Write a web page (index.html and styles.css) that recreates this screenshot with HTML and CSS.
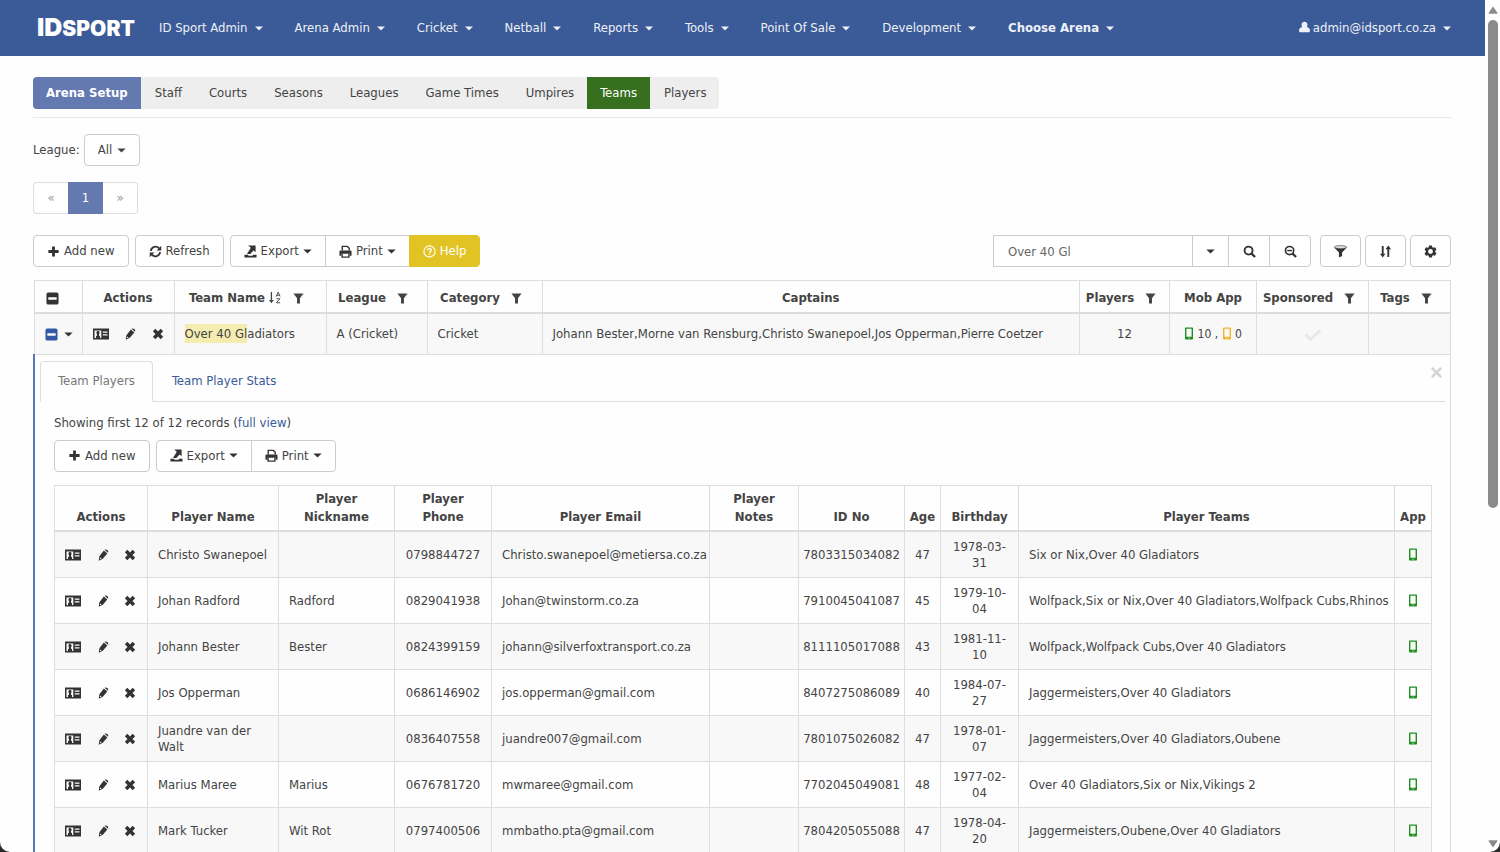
FILE: index.html
```html
<!DOCTYPE html>
<html lang="en">
<head>
<meta charset="utf-8">
<title>ID Sport - Teams</title>
<link rel="stylesheet" href="styles.css">
</head>
<body>
<svg class="sprite" aria-hidden="true">
  <symbol id="caret" viewBox="0 0 10 6"><path d="M0 0.5h10L5 5.5z"/></symbol>
  <symbol id="user" viewBox="0 0 14 14"><path d="M7 .2C9.500 .2 10.800 2 10.800 4.200 10.800 5.400 10.400 6.300 9.900 7 12.500 7.500 14 9 14 11.500 14 13 13.500 13.800 12.500 13.800H1.500C.5 13.800 0 13 0 11.500 0 9 1.500 7.500 4.100 7 3.600 6.300 3.200 5.400 3.200 4.200 3.200 2 4.500 .2 7 .2z"/></symbol>
  <symbol id="plus" viewBox="0 0 14 14"><path d="M5.500 1.500h3v4h4v3h-4v4h-3v-4h-4v-3h4z"/></symbol>
  <symbol id="refresh" viewBox="0 0 14 14"><path d="M2 6.300A5.100 5.100 0 0 1 10.900 3.600M12 7.700A5.100 5.100 0 0 1 3.100 10.400" fill="none" stroke="currentColor" stroke-width="2"/><path d="M13.200.8v5H8.200zM.8 13.200v-5h5z"/></symbol>
  <symbol id="export" viewBox="0 0 14 14"><path d="M.5 10.500h3.500l1 1h4l1-1h3.500v3H.5z"/><path d="M4.500 .5h8v7.300L10.300 5.800 6.800 9.600H3.200L7.300 3z"/></symbol>
  <symbol id="print" viewBox="0 0 14 14"><path d="M3.500 6V1.500h5.500L11 3.500V6" fill="none" stroke="currentColor" stroke-width="1.500"/><path d="M1.500 6h11a1 1 0 0 1 1 1v4.500h-2v-2h-9v2h-2V7a1 1 0 0 1 1-1z"/><path d="M3.300 9.500v3.500h7.400V9.500" fill="none" stroke="currentColor" stroke-width="1.500"/></symbol>
  <symbol id="help" viewBox="0 0 14 14"><circle cx="7" cy="7" r="6" fill="none" stroke="currentColor" stroke-width="1.200"/><path d="M5 5.700C5 3.300 9 3.300 9 5.600 9 6.900 7.100 6.900 7.100 8.400" fill="none" stroke="currentColor" stroke-width="1.400"/><path d="M6.300 9.300h1.500v1.500H6.300z"/></symbol>
  <symbol id="minus" viewBox="0 0 14 14"><path fill-rule="evenodd" d="M2.500.5h9a2 2 0 0 1 2 2v9a2 2 0 0 1-2 2h-9a2 2 0 0 1-2-2v-9a2 2 0 0 1 2-2zM2.500 5.700v2.600h9V5.700z"/></symbol>
  <symbol id="card" viewBox="0 0 16 12"><path fill-rule="evenodd" d="M0 .5h16v11H0zM1.500 2.500v7.500H3V8.200L4 7.500V6.300L3.500 5.500V4L4.300 3h1.400l.8 1v1.500L6 6.300v1.200l1 .7V10h1.300V2.500zM9.800 3.500v1.300h4.700V3.500zM9.800 6.300v1.300h4.700V6.300z"/></symbol>
  <symbol id="pencil" viewBox="0 0 14 14"><path fill-rule="evenodd" d="M8 1.800 12 5.300 6.800 11.500 2 13.700 2.800 8.600zM3.700 9.800 3.300 12 5.400 11zM8.800 1Q10.300-.2 12 1.300T12.800 4.400z"/></symbol>
  <symbol id="times" viewBox="0 0 14 14"><path d="M1 3.900 3.900 1 7 4.100 10.100 1 13 3.900 9.900 7l3.100 3.100L10.100 13 7 9.900 3.900 13 1 10.100 4.100 7z"/></symbol>
  <symbol id="close" viewBox="0 0 14 14"><path d="M2 2 12 12M12 2 2 12" stroke="currentColor" stroke-width="2.500"/></symbol>
  <symbol id="sortaz" viewBox="0 0 14 14"><path d="M2.600 1v10" stroke="currentColor" stroke-width="1.400"/><path d="M0 9.700h5.200L2.600 13.300z"/><path d="M7.800 6 9.900 1.200 12 6M8.500 4.600h2.800M8 8.300h3.700L8 12.700h4" fill="none" stroke="currentColor" stroke-width="1"/></symbol>
  <symbol id="filter" viewBox="0 0 12 12"><path d="M.5.5h11L7.600 5.700V11.500H4.400V5.700z"/></symbol>
  <symbol id="funnel" viewBox="0 0 14 14"><path d="M0 2.500 5.300 8v5.500l3.400-1.700V8L14 2.500z"/><ellipse cx="7" cy="2.300" rx="6.600" ry="1.700" fill="#ddd" stroke="currentColor" stroke-width=".6"/></symbol>
  <symbol id="search" viewBox="0 0 14 14"><circle cx="6" cy="6" r="4.300" fill="none" stroke="currentColor" stroke-width="2"/><path d="M9 9 13 13" stroke="currentColor" stroke-width="2.400"/></symbol>
  <symbol id="zoomout" viewBox="0 0 14 14"><circle cx="6" cy="6" r="4.400" fill="none" stroke="currentColor" stroke-width="1.800"/><path d="M3.500 6h5" stroke="currentColor" stroke-width="1.600"/><path d="M9 9 13 13" stroke="currentColor" stroke-width="2.400"/></symbol>
  <symbol id="sort" viewBox="0 0 14 14"><path d="M4 1v9M10 13V4" stroke="currentColor" stroke-width="2"/><path d="M1 9.300h6L4 13.500zM7 4.700h6L10 .5z"/></symbol>
  <symbol id="cog" viewBox="0 0 14 14"><path fill-rule="evenodd" d="M5.500.5h3l.5 2 .9.500 2-.6 1.500 2.600L12 6.500v1L13.400 9l-1.500 2.600-2-.6-.9.500-.5 2h-3l-.5-2-.9-.5-2 .6L.6 9 2 7.500v-1L.6 5l1.500-2.600 2 .6.9-.5zM7 4.400a2.600 2.600 0 1 0 0 5.200 2.600 2.600 0 0 0 0-5.200z"/></symbol>
  <symbol id="mobile" viewBox="0 0 10 14"><path fill-rule="evenodd" d="M1.500.5h7a.8.8 0 0 1 .8.8v11.400a.8.8 0 0 1-.8.8h-7a.8.8 0 0 1-.8-.8V1.300a.8.8 0 0 1 .8-.8zM2.200 2v8.500h5.600V2zM4.300 11.500v1h1.400v-1z"/></symbol>
  <symbol id="check" viewBox="0 0 18 14"><path d="M1.500 6.500 6.500 11.500 16.500 2" fill="none" stroke="currentColor" stroke-width="3"/></symbol>
  <symbol id="up" viewBox="0 0 10 8"><path d="M5 .5 9.500 7q.2.800-.8.800H1.300Q.3 7.800.5 7z"/></symbol>
</svg>

<div class="window">
  <div class="page">
    <nav class="navbar">
      <a class="brand" href="#"><span class="brand-id">ID</span>SPORT</a>
      <div class="menu">
        <a href="#">ID Sport Admin<svg class="caret"><use href="#caret"/></svg></a>
        <a href="#">Arena Admin<svg class="caret"><use href="#caret"/></svg></a>
        <a href="#">Cricket<svg class="caret"><use href="#caret"/></svg></a>
        <a href="#">Netball<svg class="caret"><use href="#caret"/></svg></a>
        <a href="#">Reports<svg class="caret"><use href="#caret"/></svg></a>
        <a href="#">Tools<svg class="caret"><use href="#caret"/></svg></a>
        <a href="#">Point Of Sale<svg class="caret"><use href="#caret"/></svg></a>
        <a href="#">Development<svg class="caret"><use href="#caret"/></svg></a>
        <a class="strong" href="#">Choose Arena<svg class="caret"><use href="#caret"/></svg></a>
      </div>
      <a class="account" href="#"><svg class="user"><use href="#user"/></svg>admin@idsport.co.za<svg class="caret"><use href="#caret"/></svg></a>
    </nav>

    <main class="content">
      <div class="sections">
        <nav class="section-tabs">
          <a class="lead" href="#">Arena Setup</a>
          <a href="#">Staff</a>
          <a href="#">Courts</a>
          <a href="#">Seasons</a>
          <a href="#">Leagues</a>
          <a href="#">Game Times</a>
          <a href="#">Umpires</a>
          <a class="current" href="#">Teams</a>
          <a href="#">Players</a>
        </nav>
      </div>

      <div class="league">
        <label for="league">League:</label>
        <span class="select"><select id="league"><option>All</option></select><svg class="caret"><use href="#caret"/></svg></span>
      </div>

      <nav class="pager" aria-label="Pages">
        <a href="#">«</a><a class="current" href="#">1</a><a href="#">»</a>
      </nav>

      <div class="toolbar">
        <button class="btn"><svg class="icon"><use href="#plus"/></svg>Add new</button>
        <button class="btn"><svg class="icon"><use href="#refresh"/></svg>Refresh</button>
        <div class="group">
          <button class="btn"><svg class="icon"><use href="#export"/></svg>Export<svg class="caret"><use href="#caret"/></svg></button>
          <button class="btn"><svg class="icon"><use href="#print"/></svg>Print<svg class="caret"><use href="#caret"/></svg></button>
          <button class="btn help"><svg class="icon"><use href="#help"/></svg>Help</button>
        </div>
        <div class="search group">
          <input type="text" value="Over 40 Gl" aria-label="Quick search">
          <button class="btn narrow" aria-label="Search options"><svg class="caret"><use href="#caret"/></svg></button>
          <button class="btn square" aria-label="Search"><svg class="icon"><use href="#search"/></svg></button>
          <button class="btn square" aria-label="Reset search"><svg class="icon"><use href="#zoomout"/></svg></button>
        </div>
        <div class="tools">
          <button class="btn" aria-label="Filter"><svg class="icon"><use href="#funnel"/></svg></button>
          <button class="btn" aria-label="Sort"><svg class="icon"><use href="#sort"/></svg></button>
          <button class="btn" aria-label="Settings"><svg class="icon"><use href="#cog"/></svg></button>
        </div>
      </div>

      <table class="grid teams">
        <colgroup><col class="w48"><col class="w92"><col class="w152"><col class="w101"><col class="w115"><col><col class="w90"><col class="w87"><col class="w112"><col class="w82"></colgroup>
        <thead>
          <tr>
            <th class="left"><button class="plain" aria-label="Collapse all"><svg class="icon"><use href="#minus"/></svg></button></th>
            <th>Actions</th>
            <th>Team Name<svg class="az"><use href="#sortaz"/></svg><svg class="filter"><use href="#filter"/></svg></th>
            <th>League<svg class="filter"><use href="#filter"/></svg></th>
            <th>Category<svg class="filter"><use href="#filter"/></svg></th>
            <th>Captains</th>
            <th>Players<svg class="filter"><use href="#filter"/></svg></th>
            <th>Mob App</th>
            <th>Sponsored<svg class="filter"><use href="#filter"/></svg></th>
            <th>Tags<svg class="filter"><use href="#filter"/></svg></th>
          </tr>
        </thead>
        <tbody>
          <tr class="shade">
            <td><button class="plain expand" aria-label="Team details"><svg class="icon"><use href="#minus"/></svg><svg class="caret"><use href="#caret"/></svg></button></td>
            <td><div class="actions"><a href="#" aria-label="View"><svg class="card"><use href="#card"/></svg></a><a href="#" aria-label="Edit"><svg><use href="#pencil"/></svg></a><a href="#" aria-label="Delete"><svg><use href="#times"/></svg></a></div></td>
            <td><mark>Over 40 Gl</mark>adiators</td>
            <td>A (Cricket)</td>
            <td>Cricket</td>
            <td>Johann Bester,Morne van Rensburg,Christo Swanepoel,Jos Opperman,Pierre Coetzer</td>
            <td class="center">12</td>
            <td class="center apps"><svg class="mobile"><use href="#mobile"/></svg> 10 , <svg class="mobile amber"><use href="#mobile"/></svg> 0</td>
            <td class="center"><svg class="check"><use href="#check"/></svg></td>
            <td></td>
          </tr>
          <tr>
            <td class="detail" colspan="10">
              <div class="tabs">
                <a class="current" href="#">Team Players</a>
                <a href="#">Team Player Stats</a>
                <button class="plain close" aria-label="Close"><svg class="icon"><use href="#close"/></svg></button>
              </div>
              <div class="panel">
                <p class="summary">Showing first 12 of 12 records (<a href="#">full view</a>)</p>
                <div class="toolbar">
                  <button class="btn"><svg class="icon"><use href="#plus"/></svg>Add new</button>
                  <div class="group">
                    <button class="btn"><svg class="icon"><use href="#export"/></svg>Export<svg class="caret"><use href="#caret"/></svg></button>
                    <button class="btn"><svg class="icon"><use href="#print"/></svg>Print<svg class="caret"><use href="#caret"/></svg></button>
                  </div>
                </div>
                <table class="grid players">
                  <colgroup><col class="w93"><col class="w131"><col class="w116"><col class="w97"><col class="w218"><col class="w89"><col class="w106"><col class="w36"><col class="w78"><col><col class="w37"></colgroup>
                  <thead>
                    <tr><th>Actions</th><th>Player Name</th><th>Player<br>Nickname</th><th>Player<br>Phone</th><th>Player Email</th><th>Player<br>Notes</th><th>ID No</th><th>Age</th><th>Birthday</th><th>Player Teams</th><th>App</th></tr>
                  </thead>
                  <tbody>
                    <tr><td><div class="actions"><a href="#" aria-label="View"><svg class="card"><use href="#card"/></svg></a><a href="#" aria-label="Edit"><svg><use href="#pencil"/></svg></a><a href="#" aria-label="Delete"><svg><use href="#times"/></svg></a></div></td><td>Christo Swanepoel</td><td></td><td class="center">0798844727</td><td>Christo.swanepoel@metiersa.co.za</td><td></td><td class="center">7803315034082</td><td class="center">47</td><td class="date">1978-03-31</td><td>Six or Nix,Over 40 Gladiators</td><td class="center"><svg class="mobile"><use href="#mobile"/></svg></td></tr>
                    <tr><td><div class="actions"><a href="#" aria-label="View"><svg class="card"><use href="#card"/></svg></a><a href="#" aria-label="Edit"><svg><use href="#pencil"/></svg></a><a href="#" aria-label="Delete"><svg><use href="#times"/></svg></a></div></td><td>Johan Radford</td><td>Radford</td><td class="center">0829041938</td><td>Johan@twinstorm.co.za</td><td></td><td class="center">7910045041087</td><td class="center">45</td><td class="date">1979-10-04</td><td>Wolfpack,Six or Nix,Over 40 Gladiators,Wolfpack Cubs,Rhinos</td><td class="center"><svg class="mobile"><use href="#mobile"/></svg></td></tr>
                    <tr><td><div class="actions"><a href="#" aria-label="View"><svg class="card"><use href="#card"/></svg></a><a href="#" aria-label="Edit"><svg><use href="#pencil"/></svg></a><a href="#" aria-label="Delete"><svg><use href="#times"/></svg></a></div></td><td>Johann Bester</td><td>Bester</td><td class="center">0824399159</td><td>johann@silverfoxtransport.co.za</td><td></td><td class="center">8111105017088</td><td class="center">43</td><td class="date">1981-11-10</td><td>Wolfpack,Wolfpack Cubs,Over 40 Gladiators</td><td class="center"><svg class="mobile"><use href="#mobile"/></svg></td></tr>
                    <tr><td><div class="actions"><a href="#" aria-label="View"><svg class="card"><use href="#card"/></svg></a><a href="#" aria-label="Edit"><svg><use href="#pencil"/></svg></a><a href="#" aria-label="Delete"><svg><use href="#times"/></svg></a></div></td><td>Jos Opperman</td><td></td><td class="center">0686146902</td><td>jos.opperman@gmail.com</td><td></td><td class="center">8407275086089</td><td class="center">40</td><td class="date">1984-07-27</td><td>Jaggermeisters,Over 40 Gladiators</td><td class="center"><svg class="mobile"><use href="#mobile"/></svg></td></tr>
                    <tr><td><div class="actions"><a href="#" aria-label="View"><svg class="card"><use href="#card"/></svg></a><a href="#" aria-label="Edit"><svg><use href="#pencil"/></svg></a><a href="#" aria-label="Delete"><svg><use href="#times"/></svg></a></div></td><td>Juandre van der Walt</td><td></td><td class="center">0836407558</td><td>juandre007@gmail.com</td><td></td><td class="center">7801075026082</td><td class="center">47</td><td class="date">1978-01-07</td><td>Jaggermeisters,Over 40 Gladiators,Oubene</td><td class="center"><svg class="mobile"><use href="#mobile"/></svg></td></tr>
                    <tr><td><div class="actions"><a href="#" aria-label="View"><svg class="card"><use href="#card"/></svg></a><a href="#" aria-label="Edit"><svg><use href="#pencil"/></svg></a><a href="#" aria-label="Delete"><svg><use href="#times"/></svg></a></div></td><td>Marius Maree</td><td>Marius</td><td class="center">0676781720</td><td>mwmaree@gmail.com</td><td></td><td class="center">7702045049081</td><td class="center">48</td><td class="date">1977-02-04</td><td>Over 40 Gladiators,Six or Nix,Vikings 2</td><td class="center"><svg class="mobile"><use href="#mobile"/></svg></td></tr>
                    <tr><td><div class="actions"><a href="#" aria-label="View"><svg class="card"><use href="#card"/></svg></a><a href="#" aria-label="Edit"><svg><use href="#pencil"/></svg></a><a href="#" aria-label="Delete"><svg><use href="#times"/></svg></a></div></td><td>Mark Tucker</td><td>Wit Rot</td><td class="center">0797400506</td><td>mmbatho.pta@gmail.com</td><td></td><td class="center">7804205055088</td><td class="center">47</td><td class="date">1978-04-20</td><td>Jaggermeisters,Oubene,Over 40 Gladiators</td><td class="center"><svg class="mobile"><use href="#mobile"/></svg></td></tr>
                  </tbody>
                </table>
              </div>
            </td>
          </tr>
        </tbody>
      </table>
    </main>
  </div>
  <div class="scrollbar" aria-hidden="true">
    <svg><use href="#up"/></svg>
    <div class="track"><div class="thumb"></div></div>
    <svg class="down"><use href="#up"/></svg>
  </div>
</div>
</body>
</html>
```
FILE: styles.css
```css
* { box-sizing: border-box; }

body {
  margin: 0;
  background: #2b2b2b;
  color: #444;
  font: 13px/18px "DejaVu Sans Condensed", "DejaVu Sans", sans-serif;
}

a { color: #3b5a98; text-decoration: none; }
svg { fill: currentColor; }
button, input, select { font: inherit; color: inherit; margin: 0; }
.sprite { display: none; }

.window {
  display: flex;
  height: 100vh;
  overflow: hidden;
  background: #fefefe;
  border-radius: 0 0 10px 10px;
}

.page {
  flex: 1;
  min-width: 0;
  overflow-y: auto;
  scrollbar-width: none;
}

/* Scrollbar */
.scrollbar {
  display: flex;
  flex-direction: column;
  align-items: center;
  gap: 6px;
  width: 15px;
  padding: 6px 0 4px;
  color: #8a8a8a;
}
.scrollbar svg { width: 10px; height: 8px; }
.scrollbar .down { transform: rotate(180deg); }
.track { flex: 1; width: 10px; }
.thumb { height: 60%; border-radius: 5px; background: #8a8a8a; }

/* Top bar */
.navbar {
  display: flex;
  align-items: center;
  height: 56px;
  padding: 0 34px 0 37px;
  background: #3b5a98;
}
.navbar a { color: #eef1f7; white-space: nowrap; }
.navbar .caret { width: 8px; height: 5px; margin-left: 7px; }
.navbar .brand {
  display: flex;
  align-items: baseline;
  width: 122px;
  color: #fff;
  font: 900 21px/24px Inter, sans-serif;
}
.brand .brand-id { font-size: 25px; }
.menu { display: flex; gap: 32px; }
.navbar .strong { font-weight: bold; }
.account { margin-left: auto; }
.user { width: 11px; height: 12px; margin-right: 3px; vertical-align: -1px; }
.caret { width: 9px; height: 5px; vertical-align: 1px; }

.content { padding: 21px 34px 0 33px; }

/* Section tabs */
.sections { display: flex; padding-bottom: 8px; border-bottom: 1px solid #e8e8e8; }
.section-tabs { display: flex; background: #eee; border-radius: 4px; overflow: hidden; }
.section-tabs a { padding: 7px 13px 7px 14px; color: #444; white-space: nowrap; }
.section-tabs a.lead { padding: 7px 13px; background: #6379b0; color: #fff; font-weight: bold; }
.section-tabs a.current { padding: 7px 13px; background: #36701f; color: #fff; }

.league { display: flex; align-items: center; gap: 4px; margin-top: 16px; }
.select { display: inline-grid; align-items: center; }
.select > * { grid-area: 1 / 1; }
.select select {
  appearance: none;
  width: 56px;
  height: 32px;
  padding: 0 13px;
  border: 1px solid #ccc;
  border-radius: 4px;
  background: #fff;
}
.select .caret { justify-self: end; margin-right: 14px; pointer-events: none; }

.pager { display: flex; margin-top: 16px; }
.pager a {
  width: 35px;
  padding: 6px 0;
  border: 1px solid #ddd;
  background: #fff;
  color: #999;
  text-align: center;
}
.pager a:first-child { border-right: 0; border-radius: 4px 0 0 4px; }
.pager a:last-child { border-left: 0; border-radius: 0 4px 4px 0; }
.pager a.current { border-color: #6379b0; background: #6379b0; color: #fff; }

/* Buttons */
.toolbar { display: flex; gap: 6px; }
.content > .toolbar { margin: 21px 0 13px; }
.group { display: flex; }
.btn {
  display: inline-flex;
  align-items: center;
  justify-content: center;
  gap: 4px;
  height: 32px;
  padding: 0 13px;
  border: 1px solid #ccc;
  border-radius: 4px;
  background: #fff;
  white-space: nowrap;
}
.btn .icon, .btn .caret { color: #333; }
.icon { width: 13px; height: 13px; flex: none; }
.group > * + * { margin-left: -1px; }
.group > *:not(:first-child) { border-top-left-radius: 0; border-bottom-left-radius: 0; }
.group > *:not(:last-child) { border-top-right-radius: 0; border-bottom-right-radius: 0; }
.btn.help, .help .icon { border-color: #e1c424; background: #e1c424; color: #fff; }
.search { margin-left: auto; }
.search input {
  width: 200px;
  height: 32px;
  padding: 0 14px;
  border: 1px solid #ccc;
  border-radius: 0;
  background: #fff;
  color: #666;
}
.narrow { width: 37px; }
.square { width: 42px; }
.tools { display: flex; gap: 4px; margin-left: 3px; }

/* Data grids */
.grid { width: 100%; border-collapse: collapse; table-layout: fixed; }
.grid th, .grid td { border: 1px solid #ddd; }
.grid th {
  padding: 4px 0;
  border-bottom-width: 2px;
  font-weight: bold;
  line-height: 18px;
  text-align: center;
  vertical-align: bottom;
  white-space: nowrap;
}
.grid td { padding: 7px 0 6px 10px; line-height: 16px; }
.grid .center { padding-left: 0; text-align: center; }
.teams > thead th { padding: 8px 0 5px; }
.teams .shade td { height: 41px; background: #f8f8f8; }
.grid .left { padding-left: 11px; text-align: left; }
.plain {
  display: inline-flex;
  align-items: center;
  padding: 0;
  border: 0;
  background: none;
  color: #333;
  vertical-align: middle;
}
.expand { gap: 6px; }
.expand .icon { color: #3157a5; }
.az { width: 13px; height: 13px; margin-left: 4px; vertical-align: -2px; }
.filter { width: 11px; height: 11px; margin: 0 7px 0 11px; vertical-align: -2px; }
.actions { display: flex; align-items: center; justify-content: space-between; width: 71px; }
.actions a { display: flex; color: #333; }
.actions svg { width: 12px; height: 12px; }
.actions .card { width: 16px; height: 12px; }
mark { background: #f5edb0; color: inherit; padding: 2px 0; }
.mobile { width: 10px; height: 13px; color: #1f8f1f; vertical-align: -2px; }
.amber { color: #efb52a; }
.apps { font-size: 12px; white-space: nowrap; }
.check { width: 18px; height: 14px; color: #e8e8e8; vertical-align: middle; }

.w36 { width: 36px; }
.w37 { width: 37px; }
.w48 { width: 48px; }
.w78 { width: 78px; }
.w82 { width: 82px; }
.w87 { width: 87px; }
.w89 { width: 89px; }
.w90 { width: 90px; }
.w92 { width: 92px; }
.w93 { width: 93px; }
.w97 { width: 97px; }
.w101 { width: 101px; }
.w106 { width: 106px; }
.w112 { width: 112px; }
.w115 { width: 115px; }
.w116 { width: 116px; }
.w131 { width: 131px; }
.w152 { width: 152px; }
.w218 { width: 218px; }

/* Expanded row */
.teams td.detail { padding: 6px 5px 0; border-left: 2px solid #5a78b8; border-bottom: 0; }
.tabs { display: flex; border-bottom: 1px solid #ddd; }
.tabs a { margin-bottom: -1px; padding: 10px 18px 11px; border: 1px solid transparent; line-height: 18px; }
.tabs a.current {
  padding-left: 17px;
  padding-right: 17px;
  border-color: #ddd #ddd #fefefe;
  border-radius: 4px 4px 0 0;
  background: #fefefe;
  color: #777;
}
.close { align-self: flex-start; margin: 5px 2px 0 auto; color: #d2d2d2; }
.panel { padding: 12px 13px 0 14px; }
.summary { margin: 0 0 8px; line-height: 18px; }
.panel .toolbar { margin-bottom: 13px; }
.players tbody tr:nth-child(odd) { background: #f8f8f8; }
.grid .date { padding-left: 11px; padding-right: 11px; text-align: center; }
```
